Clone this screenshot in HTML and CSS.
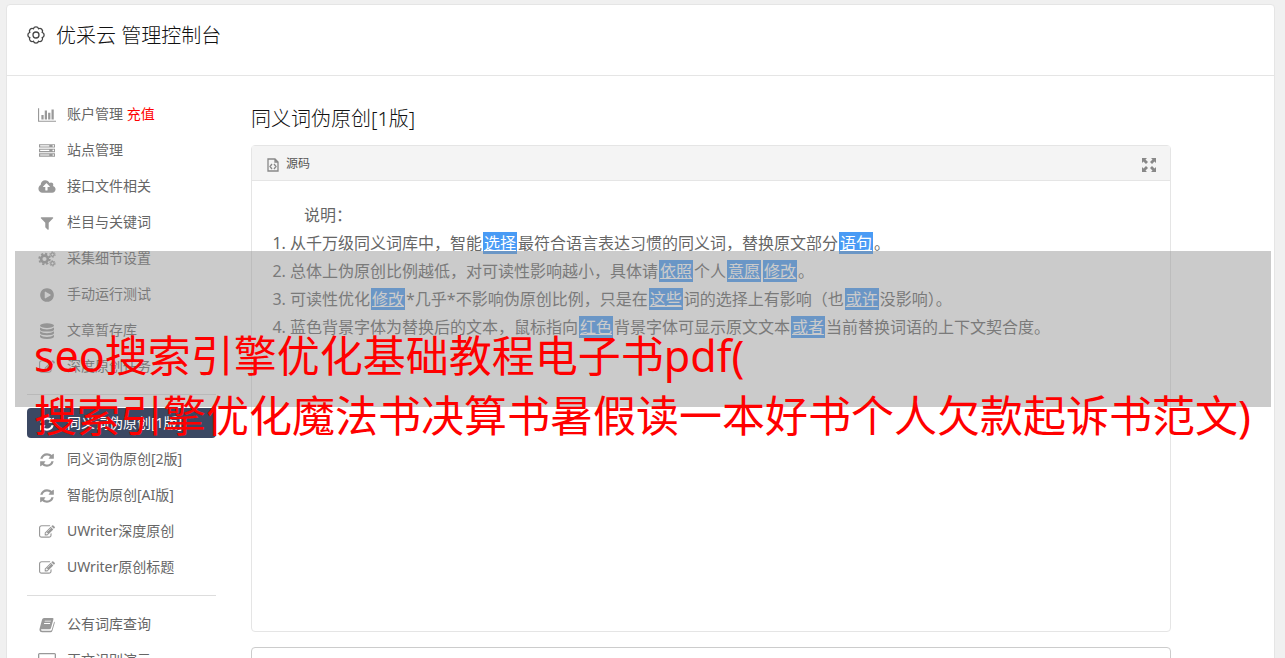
FILE: index.html
```html
<!DOCTYPE html>
<html lang="zh-CN">
<head>
    <meta charset="UTF-8">
    <meta name="viewport" content="width=device-width, initial-scale=1.0">
    <title>优采云 管理控制台</title>
    <link rel="stylesheet" href="styles.css">
</head>
<body>
    <!-- 图标 -->
    <svg class="sprite" aria-hidden="true">
        <symbol id="i-chart" viewBox="0 0 2048 1792"><path d="M640 896v512h-256v-512h256zm384-512v1024h-256v-1024h256zm1024 1152v128h-2048v-1536h128v1408h1920zm-640-896v768h-256v-768h256zm384-384v1152h-256v-1152h256z"/></symbol>
        <symbol id="i-server" viewBox="0 0 1792 1792"><path d="M128 1408h1024v-128h-1024v128zm0-512h1024v-128h-1024v128zm1568 448q0-40-28-68t-68-28-68 28-28 68 28 68 68 28 68-28 28-68zm-1568-960h1024v-128h-1024v128zm1568 448q0-40-28-68t-68-28-68 28-28 68 28 68 68 28 68-28 28-68zm0-512q0-40-28-68t-68-28-68 28-28 68 28 68 68 28 68-28 28-68zm96 832v384h-1792v-384h1792zm0-512v384h-1792v-384h1792zm0-512v384h-1792v-384h1792z"/></symbol>
        <symbol id="i-cloud" viewBox="-64 0 1920 1792"><path d="M1216 864q0-14-9-23l-352-352q-9-9-23-9t-23 9l-351 351q-10 12-10 24 0 14 9 23t23 9h224v352q0 13 9.5 22.5t22.5 9.5h192q13 0 22.5-9.5t9.5-22.5v-352h224q13 0 22.5-9.5t9.5-22.5zm640 288q0 159-112.5 271.5t-271.5 112.5h-1088q-185 0-316.5-131.5t-131.5-316.5q0-130 70-240t188-165q-2-30-2-43 0-212 150-362t362-150q156 0 285.5 87t188.5 231q71-62 166-62 106 0 181 75t75 181q0 76-41 138 130 31 213.5 135.5t83.5 238.5z"/></symbol>
        <symbol id="i-filter" viewBox="0 0 1792 1792"><path d="M1595 295q17 41-14 70l-493 493v742q0 42-39 59-13 5-25 5-27 0-45-19l-256-256q-19-19-19-45v-486l-493-493q-31-29-14-70 17-39 59-39h1280q42 0 59 39z"/></symbol>
        <symbol id="i-cogs" viewBox="0 0 18 16">
            <g fill="none" stroke="currentColor">
                <circle cx="6.5" cy="8" r="3.4" stroke-width="2.6"/>
                <circle cx="6.5" cy="8" r="5.3" stroke-width="1.8" stroke-dasharray="2.2 1.96"/>
                <circle cx="14.5" cy="3.6" r="1.7" stroke-width="1.2"/>
                <circle cx="14.5" cy="3.6" r="2.7" stroke-width="1" stroke-dasharray="1.4 1.43"/>
                <circle cx="14.5" cy="12.4" r="1.7" stroke-width="1.2"/>
                <circle cx="14.5" cy="12.4" r="2.7" stroke-width="1" stroke-dasharray="1.4 1.43"/>
            </g>
        </symbol>
        <symbol id="i-play" viewBox="0 0 1792 1792"><path fill-rule="evenodd" d="M896 128q209 0 385.500 103t279.500 279.500 103 385.500-103 385.500-279.500 279.500-385.500 103-385.500-103-279.500-279.500-103-385.500 103-385.500 279.500-279.500 385.500-103zm384 823q32-18 32-55t-32-55l-544-320q-31-19-64-1-32 19-32 56v640q0 37 32 56 16 8 32 8 17 0 32-9z"/></symbol>
        <symbol id="i-database" viewBox="0 0 16 16">
            <ellipse cx="8" cy="2.600" rx="7" ry="2.400"/>
            <path d="M1 4.500q2.500 2 7 2t7-2v1.900q0 2.200-7 2.200t-7-2.200zM1 8.200q2.500 2 7 2t7-2v1.900q0 2.200-7 2.200t-7-2.200zM1 11.900q2.500 2 7 2t7-2v1.700q0 2.400-7 2.400t-7-2.400z"/>
        </symbol>
        <symbol id="i-edit" viewBox="0 0 1792 1792"><path d="M888 1184l116-116-152-152-116 116v56h96v96h56zm440-720q-16-16-33 1l-350 350q-17 17-1 33t33-1l350-350q17-17 1-33zm80 594v190q0 119-84.500 203.500t-203.500 84.500h-832q-119 0-203.500-84.500t-84.500-203.500v-832q0-119 84.500-203.500t203.500-84.500h832q63 0 117 25 15 7 18 23 3 17-9 29l-49 49q-14 14-32 8-23-6-45-6h-832q-66 0-113 47t-47 113v832q0 66 47 113t113 47h832q66 0 113-47t47-113v-126q0-13 9-22l64-64q15-15 35-7t20 29zm-96-738l288 288-672 672h-288v-288zm444 132l-92 92-288-288 92-92q28-28 68-28t68 28l152 152q28 28 28 68t-28 68z"/></symbol>
        <symbol id="i-refresh" viewBox="0 0 1792 1792"><path d="M1639 1056q0 5-1 7-64 268-268 434.500t-478 166.500q-146 0-282.500-55t-243.500-157l-129 129q-19 19-45 19t-45-19-19-45v-448q0-26 19-45t45-19h448q26 0 45 19t19 45-19 45l-137 137q71 66 161 102t187 36q134 0 250-65t186-179q11-17 53-117 8-23 30-23h192q13 0 22.500 9.500t9.500 22.500zm25-800v448q0 26-19 45t-45 19h-448q-26 0-45-19t-19-45 19-45l138-138q-148-137-349-137-134 0-250 65t-186 179q-11 17-53 117-8 23-30 23h-199q-13 0-22.500-9.500t-9.500-22.500v-7q65-268 270-434.500t480-166.500q146 0 284 55.500t245 156.500l130-129q19-19 45-19t45 19 19 45z"/></symbol>
        <symbol id="i-book" viewBox="0 0 16 16">
            <path fill-rule="evenodd" d="M5 1h8.500q1.300 0 .9 1.400L12 11q-.4 1.200-1.600 1.200H2.700q-1 0-.7.900.2.700 1.300.7h8.300q.8 0 1.100-.8l2.500-8.600q.8.500.5 1.500l-2.300 7.800q-.5 1.500-1.900 1.500H3Q.8 15.200.5 13.200q-.1-1 .2-1.900L3.100 2.600Q3.600 1 5 1zm.9 2.700l-.3.900h6l.3-.9zM5.200 6l-.3.900h6l.3-.9z"/>
        </symbol>
        <symbol id="i-desktop" viewBox="0 0 18 16"><path fill-rule="evenodd" d="M1.500 0h15Q18 0 18 1.500v10q0 1.500-1.500 1.500H11q0 1 1 2v1H6v-1q1-1 1-2H1.500Q0 13 0 11.500v-10Q0 0 1.500 0zM1.300 1.300v9h15.400v-9z"/></symbol>
    </svg>

    <div class="container">
        <header class="page-header">
            <svg class="gear" viewBox="0 0 20 20" aria-hidden="true">
                <path d="M16.280 7.400a2.750 2.750 0 0 1 0 5.200a2.750 2.750 0 0 1-3.680 3.680a2.750 2.750 0 0 1-5.200 0a2.750 2.750 0 0 1-3.680-3.680a2.750 2.750 0 0 1 0-5.200a2.750 2.750 0 0 1 3.680-3.680a2.750 2.750 0 0 1 5.200 0a2.750 2.750 0 0 1 3.680 3.680z"/>
                <circle cx="10" cy="10" r="3"/>
            </svg>
            <h1>优采云 管理控制台</h1>
        </header>

        <div class="layout">
            <nav class="sidebar">
                <a href="#"><svg><use href="#i-chart"/></svg><span>账户管理 <span class="recharge">充值</span></span></a>
                <a href="#"><svg><use href="#i-server"/></svg>站点管理</a>
                <a href="#"><svg><use href="#i-cloud"/></svg>接口文件相关</a>
                <a href="#"><svg><use href="#i-filter"/></svg>栏目与关键词</a>
                <a href="#"><svg><use href="#i-cogs"/></svg>采集细节设置</a>
                <a href="#"><svg><use href="#i-play"/></svg>手动运行测试</a>
                <a href="#"><svg><use href="#i-database"/></svg>文章暂存库</a>
                <a href="#"><svg><use href="#i-edit"/></svg>深度原创任务</a>
                <hr>
                <a href="#" class="active"><svg><use href="#i-refresh"/></svg>同义词伪原创[1版]</a>
                <a href="#"><svg><use href="#i-refresh"/></svg>同义词伪原创[2版]</a>
                <a href="#"><svg><use href="#i-refresh"/></svg>智能伪原创[AI版]</a>
                <a href="#"><svg><use href="#i-edit"/></svg>UWriter深度原创</a>
                <a href="#"><svg><use href="#i-edit"/></svg>UWriter原创标题</a>
                <hr>
                <a href="#"><svg><use href="#i-book"/></svg>公有词库查询</a>
                <a href="#"><svg><use href="#i-desktop"/></svg>正文识别演示</a>
            </nav>

            <main class="content">
                <h2>同义词伪原创[1版]</h2>

                <div class="editor">
                    <div class="toolbar">
                        <button type="button" class="source">
                            <svg viewBox="0 0 12 14" aria-hidden="true">
                                <path d="M1 1h7l3 3v9H1zM8 1v3h3M5 6L3 8.500 5 11M7 6l2 2.500L7 11"/>
                            </svg>
                            源码
                        </button>
                        <button type="button" class="expand" aria-label="全屏">
                            <svg viewBox="0 0 14 14" aria-hidden="true">
                                <path d="M0 0h5L3.500 1.500 6 4 4 6 1.500 3.500 0 5zM14 0v5l-1.500-1.500L10 6 8 4l2.500-2.500L9 0zM0 14V9l1.500 1.500L4 8l2 2-2.500 2.500L5 14zM14 14H9l1.500-1.500L8 10l2-2 2.500 2.500L14 9z"/>
                            </svg>
                        </button>
                    </div>
                    <div class="editor-body">
                        <p>说明：</p>
                        <ol>
                            <li>从千万级同义词库中，智能<u>选择</u>最符合语言表达习惯的同义词，替换原文部分<u>语句</u>。</li>
                            <li>总体上伪原创比例越低，对可读性影响越小，具体请<u>依照</u>个人<u>意愿</u><u>修改</u>。</li>
                            <li>可读性优化<u>修改</u>*几乎*不影响伪原创比例，只是在<u>这些</u>词的选择上有影响（也<u>或许</u>没影响）。</li>
                            <li>蓝色背景字体为替换后的文本，鼠标指向<u>红色</u>背景字体可显示原文文本<u>或者</u>当前替换词语的上下文契合度。</li>
                        </ol>
                    </div>
                </div>

                <textarea class="result" aria-label="结果"></textarea>
            </main>
        </div>
    </div>

    <div class="banner">
        seo搜索引擎优化基础教程电子书pdf(<br>搜索引擎优化魔法书决算书暑假读一本好书个人欠款起诉书范文)
    </div>
</body>
</html>
```
FILE: styles.css
```css
* {
    box-sizing: border-box;
}

body {
    height: 100vh;
    margin: 0;
    padding: 4px 10px 0 6px;
    overflow: hidden;
    background: #f0f0f0;
    color: #666;
    font-family: "Noto Sans", "Noto Sans CJK SC", sans-serif;
    font-size: 14px;
}

.sprite {
    display: none;
}

.container {
    background: #fff;
    border: 1px solid #e5e5e5;
    border-radius: 4px;
}

.page-header {
    display: flex;
    align-items: center;
    gap: 10px;
    height: 71px;
    padding: 0 19px 8px;
    border-bottom: 1px solid #e5e5e5;
}

.gear {
    width: 20px;
    height: 20px;
    margin-bottom: 2px;
    fill: none;
    stroke: #444;
    stroke-width: 1.3;
}

h1,
h2 {
    margin: 0;
    color: #111;
    font-size: 20px;
    font-weight: 300;
    line-height: 30px;
}

.layout {
    display: flex;
    gap: 35px;
    padding: 23px 103px 20px 20px;
}

/* 左侧菜单 */
.sidebar {
    display: flex;
    flex: 0 0 189px;
    flex-direction: column;
    gap: 6px;
}

.sidebar a {
    display: flex;
    align-items: center;
    gap: 11px;
    height: 30px;
    padding: 0 11px 2px;
    border-radius: 4px;
    color: #666;
    text-decoration: none;
    white-space: nowrap;
}

.sidebar svg {
    flex: none;
    width: 18px;
    height: 16px;
    margin-top: 4px;
    color: #999;
    fill: currentColor;
}

.sidebar hr {
    width: 100%;
    height: 1px;
    margin: 7px 0;
    border: 0;
    background: #ddd;
}

.sidebar .active,
.sidebar .active svg {
    color: #fff;
}

.sidebar .active {
    background: #3b4863;
}

.recharge {
    color: #f00;
}

/* 编辑器 */
.content {
    flex: 1;
    min-width: 0;
    padding-top: 5px;
}

h2 {
    margin-bottom: 11px;
}

.editor {
    min-height: 487px;
    border: 1px solid #e5e5e5;
    border-radius: 4px;
}

.toolbar {
    display: flex;
    align-items: center;
    justify-content: space-between;
    height: 35px;
    padding: 0 14px 0 15px;
    background: #f4f4f4;
    border-bottom: 1px solid #e5e5e5;
}

.toolbar button {
    display: flex;
    align-items: center;
    gap: 7px;
    padding: 0;
    border: 0;
    background: none;
    color: #555;
    font-family: inherit;
    font-size: 12px;
}

.toolbar svg {
    height: 14px;
    margin-top: 4px;
}

.source svg {
    width: 12px;
    fill: none;
    stroke: #888;
    stroke-width: 1.3;
}

.expand svg {
    width: 14px;
    fill: #888;
}

.editor-body {
    padding: 20px;
    font-size: 16px;
    line-height: 28px;
}

.editor-body p {
    margin: 0;
    padding-left: 32px;
}

.editor-body ol {
    margin: 0;
    padding-left: 18px;
}

.editor-body u {
    margin: 0 1px;
    padding: 0 1px;
    background: #499bf5;
    color: #fff;
}

.result {
    display: block;
    width: 100%;
    height: 120px;
    margin-top: 15px;
    border: 1px solid #ccc;
    border-radius: 4px;
    resize: none;
}

/* 覆盖在页面上的标题条 */
.banner {
    position: absolute;
    top: 251px;
    right: 14px;
    left: 15px;
    height: 156px;
    padding: 75px 0 0 19px;
    background: rgba(145, 145, 145, 0.47);
    color: #f00;
    font-size: 43px;
    line-height: 60px;
    white-space: nowrap;
}
```
